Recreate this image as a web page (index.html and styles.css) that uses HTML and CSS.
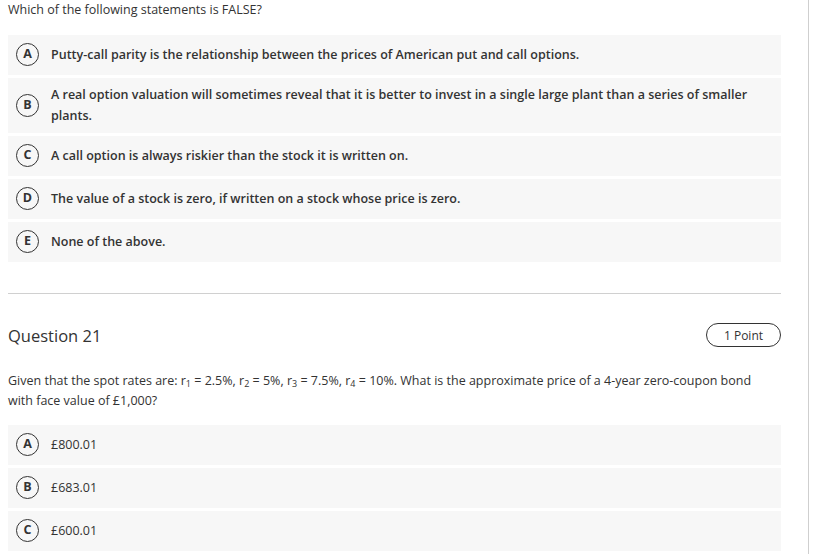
FILE: index.html
```html
<!DOCTYPE html>
<html>
<head>
<meta charset="utf-8">
<link rel="stylesheet" href="styles.css">
</head>
<body>
<div class="page">
  <main class="content">
    <section class="question">
      <p class="prompt">Which of the following statements is FALSE?</p>
      <ul class="options strong">
        <li class="option"><span class="badge">A</span><span class="label">Putty-call parity is the relationship between the prices of American put and call options.</span></li>
        <li class="option"><span class="badge">B</span><span class="label">A real option valuation will sometimes reveal that it is better to invest in a single large plant than a series of smaller plants.</span></li>
        <li class="option"><span class="badge">C</span><span class="label">A call option is always riskier than the stock it is written on.</span></li>
        <li class="option"><span class="badge">D</span><span class="label">The value of a stock is zero, if written on a stock whose price is zero.</span></li>
        <li class="option"><span class="badge">E</span><span class="label">None of the above.</span></li>
      </ul>
    </section>
    <hr class="divider">
    <section class="question q2">
      <div class="q-head">
        <h2 class="q-title">Question 21</h2>
        <span class="points">1 Point</span>
      </div>
      <p class="prompt body">Given that the spot rates are: r<sub>1</sub> = 2.5%, r<sub>2</sub> = 5%, r<sub>3</sub> = 7.5%, r<sub>4</sub> = 10%. What is the approximate price of a 4-year zero-coupon bond with face value of £1,000?</p>
      <ul class="options">
        <li class="option"><span class="badge">A</span><span class="label">£800.01</span></li>
        <li class="option"><span class="badge">B</span><span class="label">£683.01</span></li>
        <li class="option"><span class="badge">C</span><span class="label">£600.01</span></li>
      </ul>
    </section>
  </main>
  <div class="rail"></div>
</div>
</body>
</html>
```
FILE: styles.css
```css
* { box-sizing: border-box; }
html, body { margin: 0; padding: 0; background: #fff; }
body {
  font-family: "Open Sans", "Liberation Sans", sans-serif;
  color: #333;
  font-size: 12.5px;
}
.page {
  display: flex;
  height: 554px;
  overflow: hidden;
}
.content {
  width: 781px;
  flex: none;
  padding-left: 8px;
}
.rail {
  margin-left: 27px;
  width: 1px;
  background: #cfcfcf;
}
.prompt {
  margin: 0;
  line-height: 20px;
  font-size: 12.5px;
}
.options {
  list-style: none;
  margin: 15px 0 0;
  padding: 0;
  display: flex;
  flex-direction: column;
  gap: 3px;
}
.option {
  background: #f7f7f7;
  min-height: 40px;
  padding: 6px 20px 7px 8px;
  display: flex;
  align-items: center;
  gap: 12px;
  font-size: 12.5px;
  line-height: 21px;
}
.strong .option { font-weight: 600; }
.badge {
  flex: 0 0 23px;
  width: 23px;
  min-width: 23px;
  height: 23px;
  border: 1.5px solid #333;
  border-radius: 50%;
  display: flex;
  align-items: center;
  justify-content: center;
  font-size: 12.5px;
  font-weight: 700;
  line-height: 1;
  color: #333;
}
.divider {
  border: 0;
  border-top: 1px solid #d0d0d0;
  margin: 31px 0 0;
}
.q-head {
  display: flex;
  justify-content: space-between;
  align-items: center;
  margin-top: 29px;
  height: 24px;
}
.q-title {
  margin: 0;
  font-size: 16.5px;
  font-weight: 400;
  color: #333;
}
.points {
  width: 75px;
  height: 24px;
  border: 1px solid #333;
  border-radius: 12px;
  display: flex;
  align-items: center;
  justify-content: center;
  font-size: 12px;
}
.prompt.body { margin-top: 24px; padding-right: 14px; }
.prompt sub { font-size: 9px; vertical-align: -2px; line-height: 0; }
.q2 .options { margin-top: 14px; }
```
